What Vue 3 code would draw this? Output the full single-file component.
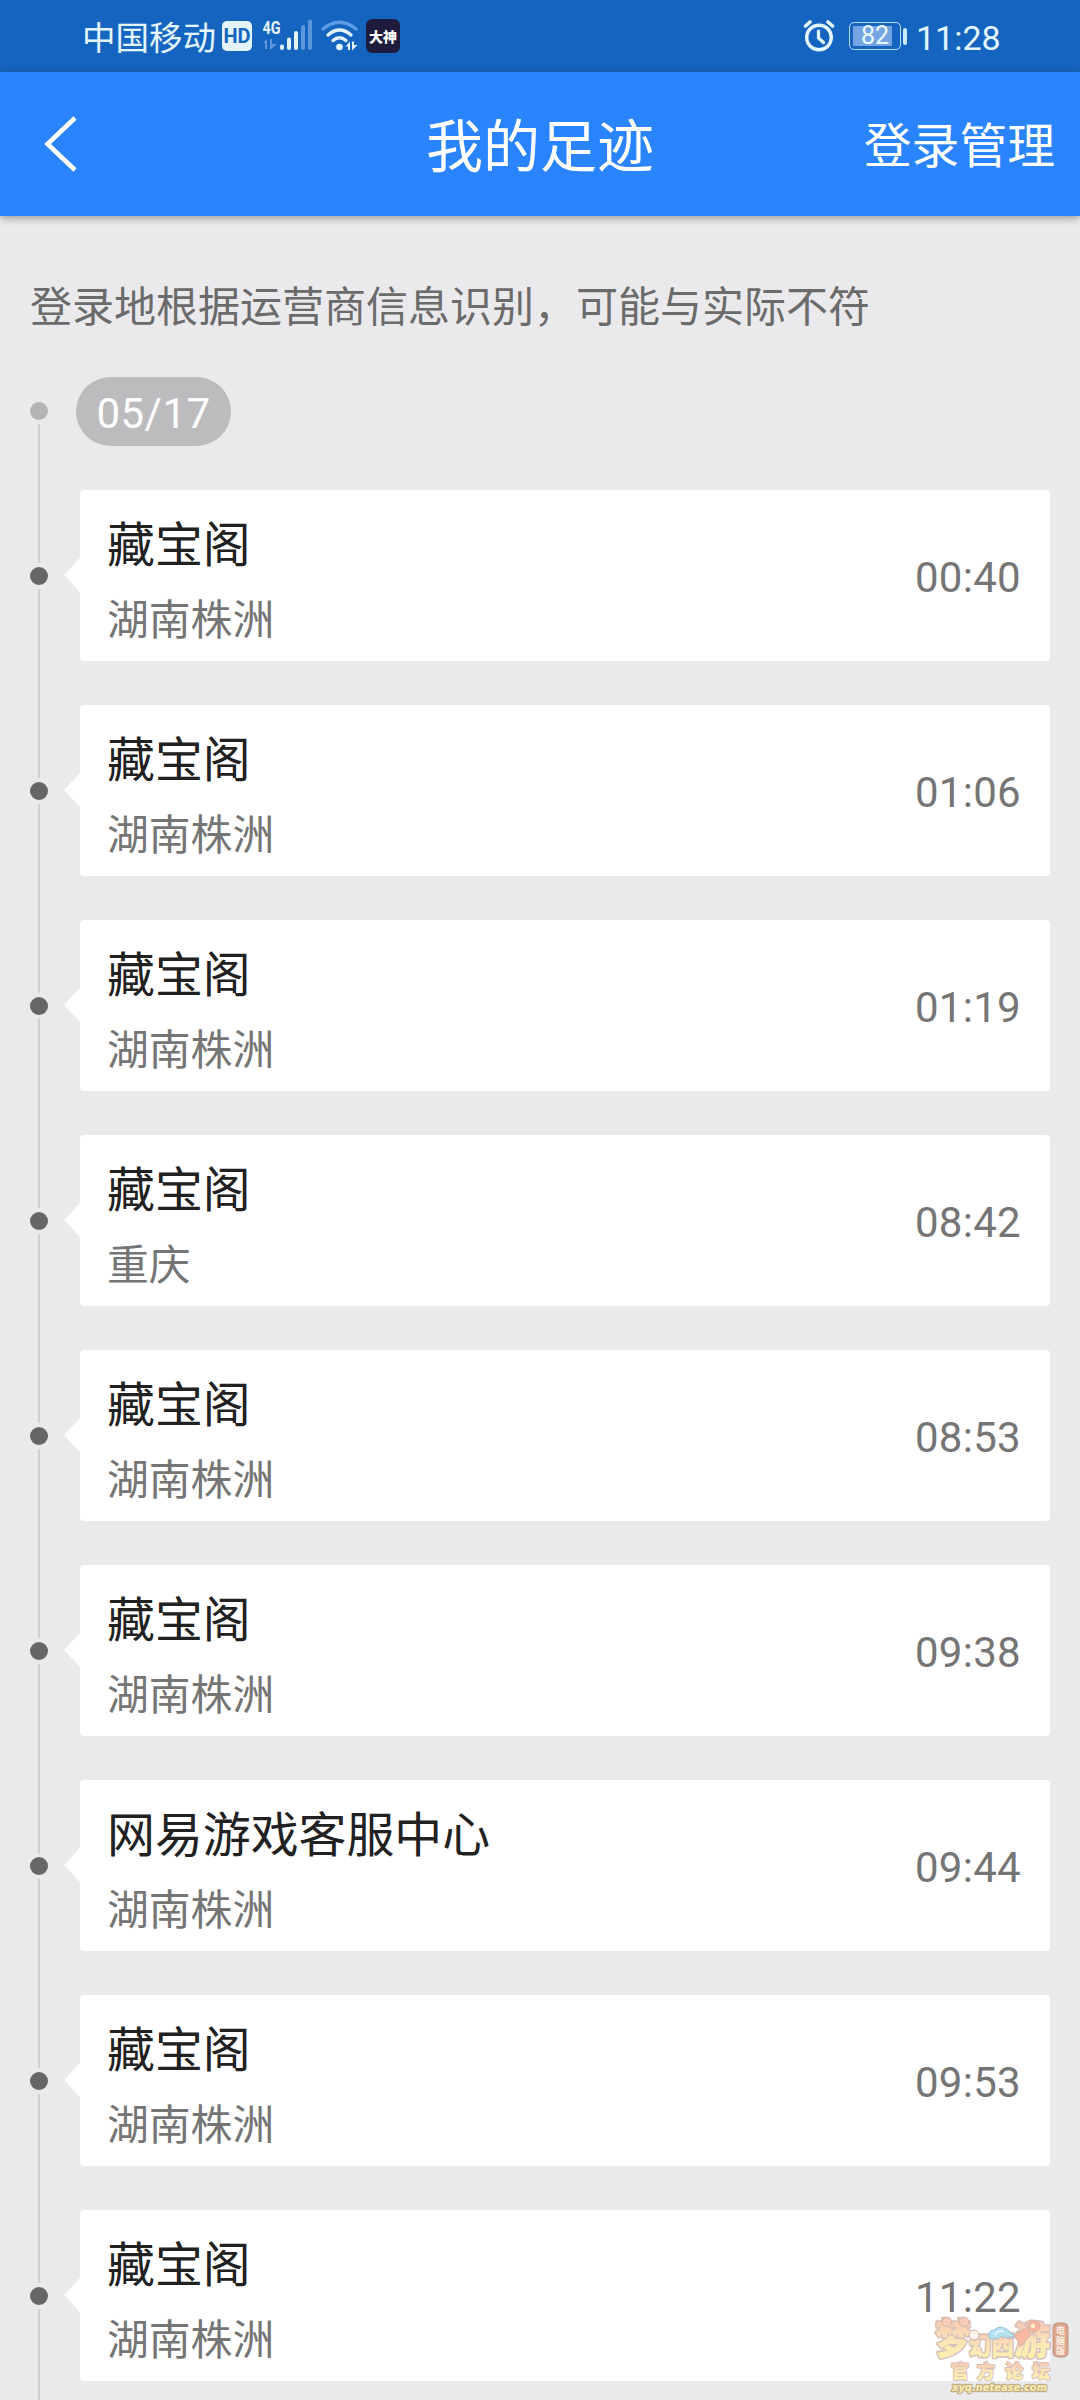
<script setup>
const records = [
  { name: '藏宝阁', place: '湖南株洲', time: '00:40' },
  { name: '藏宝阁', place: '湖南株洲', time: '01:06' },
  { name: '藏宝阁', place: '湖南株洲', time: '01:19' },
  { name: '藏宝阁', place: '重庆', time: '08:42' },
  { name: '藏宝阁', place: '湖南株洲', time: '08:53' },
  { name: '藏宝阁', place: '湖南株洲', time: '09:38' },
  { name: '网易游戏客服中心', place: '湖南株洲', time: '09:44' },
  { name: '藏宝阁', place: '湖南株洲', time: '09:53' },
  { name: '藏宝阁', place: '湖南株洲', time: '11:22' },
]
</script>

<template>
  <div class="screen">
    <div class="status">
      <span class="carrier">中国移动</span>
      <span class="hd">HD</span>
      <svg class="signal" width="52" height="36" viewBox="0 0 52 36">
        <text x="0.5" y="15.5" font-size="19" font-weight="700" textLength="18" lengthAdjust="spacingAndGlyphs" fill="#e3f4ff">4G</text>
        <g fill="#5c96dc">
          <path d="M1 25 L5 21 V31 H3 V25Z M8 21 H10 V26 H15 L8 32Z" />
          <rect x="39" y="7" width="4" height="25" rx="2" />
          <rect x="46" y="1.500" width="4" height="30.500" rx="2" />
        </g>
        <g fill="#e3f4ff">
          <rect x="18" y="26.500" width="4" height="5.500" rx="2" />
          <rect x="25" y="19.500" width="4" height="12.500" rx="2" />
          <rect x="32" y="13" width="4" height="19" rx="2" />
        </g>
      </svg>
      <svg class="wifi" width="38" height="32" viewBox="0 0 38 32">
        <g fill="none" stroke-width="3.400" stroke-linecap="round">
          <path d="M2 9 Q18.500 -4.500 35 9" stroke="#5c9ce4" />
          <path d="M7 15 Q18.500 5 30 15" stroke="#e3f4ff" />
          <path d="M12 20.500 Q18.500 15 25 20.500" stroke="#e3f4ff" />
        </g>
        <circle cx="18.500" cy="27" r="3.300" fill="#e3f4ff" />
        <path d="M24.500 26.500 L29 21.500 V30 H27 V26.500Z M31 21.500 H33 V25 H36.500 L31 30.500Z" fill="#e3f4ff" />
      </svg>
      <span class="app">大神</span>
      <svg class="alarm" width="32" height="34" viewBox="0 0 32 34">
        <g fill="none" stroke="#e3f8ff" stroke-linecap="round" stroke-linejoin="round">
          <circle cx="16" cy="18.500" r="12.300" stroke-width="3.400" />
          <path d="M15.500 12 V19 L20.500 23.500" stroke-width="3.200" />
          <path d="M2.500 7 L7 3 M25 3 L29.500 7" stroke-width="3.600" />
        </g>
      </svg>
      <div class="battery"><span class="level"></span><span class="percent">82</span></div>
      <span class="tip"></span>
      <span class="clock">11:28</span>
    </div>

    <header class="bar">
      <svg class="back" width="40" height="60" viewBox="0 0 40 60">
        <path d="M35 4 L7.500 30 L35 56" fill="none" stroke="#fff" stroke-width="4.600" />
      </svg>
      <h1>我的足迹</h1>
      <span class="manage">登录管理</span>
    </header>

    <main>
      <p class="notice">登录地根据运营商信息识别，可能与实际不符</p>

      <div class="date-row">
        <div class="rail first"><i class="dot pale"></i><i class="line"></i></div>
        <span class="pill">05/17</span>
      </div>

      <div v-for="(r, i) in records" :key="i" class="row">
        <div class="rail"><i class="line"></i><i class="dot"></i><i class="line"></i></div>
        <article class="card">
          <div class="info">
            <h2>{{ r.name }}</h2>
            <p>{{ r.place }}</p>
          </div>
          <time>{{ r.time }}</time>
        </article>
      </div>
    </main>

    <svg class="mark" width="142" height="86" viewBox="0 0 142 86">
      <defs>
        <linearGradient id="warm" x1="0" y1="0" x2="0" y2="1">
          <stop offset="0.200" stop-color="#f8bda6" />
          <stop offset="0.550" stop-color="#fbe0ac" />
          <stop offset="0.900" stop-color="#fff2a0" />
        </linearGradient>
      </defs>
      <g paint-order="stroke" stroke="#d3b9b0" stroke-linejoin="round" font-weight="900">
        <g fill="url(#warm)" stroke-width="3.400">
          <text x="3" y="40" font-size="41" textLength="36" lengthAdjust="spacingAndGlyphs">梦</text>
          <text x="37" y="41" font-size="26" textLength="22" lengthAdjust="spacingAndGlyphs">幻</text>
          <text x="59" y="41" font-size="26" textLength="23" lengthAdjust="spacingAndGlyphs">西</text>
          <text x="82" y="40" font-size="38" textLength="36" lengthAdjust="spacingAndGlyphs">游</text>
        </g>
        <g font-size="18" stroke-width="2.200" fill="url(#warm)">
          <text x="19" y="63.500">官</text>
          <text x="45" y="63.500">方</text>
          <text x="73" y="63.500">论</text>
          <text x="100" y="63.500">坛</text>
        </g>
      </g>
      <g stroke="#cda69b" stroke-width="1">
        <circle cx="15" cy="8" r="4.800" fill="#f9c3ad" />
        <circle cx="32" cy="8" r="4.800" fill="#f9c3ad" />
        <circle cx="42" cy="21" r="5" fill="#fff1ea" />
        <circle cx="102" cy="12" r="6" fill="#f7a68e" />
        <path d="M82 21 Q89 16 96 13 L98 22 L88 33 Q86 26 82 21Z" fill="#f7ad94" />
      </g>
      <path d="M57 24 Q55 17 62 16 Q68 10 76 16 Q79 20 83 22 Q74 25 70 22 Q64 27 57 24Z" fill="#a9dcf2" stroke="#8bb7cf" />
      <path d="M63 21 Q66 15 72 18" fill="none" stroke="#e9f8ff" stroke-width="1.500" />
      <circle cx="101" cy="12" r="2.200" fill="#fff2c4" />
      <rect x="121.500" y="9.500" width="14" height="33" rx="4" fill="#dfa084" stroke="#c98f77" stroke-width="2" />
      <g font-size="9" font-weight="700" fill="#fff3e6">
        <text x="124" y="19.500">电</text>
        <text x="124" y="29.500">脑</text>
        <text x="124" y="39.500">版</text>
      </g>
      <text class="site" x="20" y="77" font-size="11" textLength="95" lengthAdjust="spacingAndGlyphs" fill="#fff0a0" stroke="#b9a37a" stroke-width="2.600" stroke-linejoin="round" paint-order="stroke">xyq.netease.com</text>
    </svg>
  </div>
</template>

<style>
body {
  margin: 0;
  background: #eaeaec;
}
</style>

<style scoped>
.screen {
  position: relative;
  width: 1080px;
  height: 2400px;
  overflow: hidden;
  background: #eaeaec;
  font-family: "Noto Sans CJK SC", sans-serif;
}
h1, h2, p {
  margin: 0;
  font-weight: 400;
}
.status {
  display: flex;
  align-items: center;
  box-sizing: border-box;
  height: 72px;
  padding-left: 82px;
  background: #1565c0;
  color: #e3f6ff;
}
.carrier {
  width: 136px;
  font-size: 33.500px;
  line-height: 70px;
  white-space: nowrap;
}
.hd {
  width: 30px;
  height: 30px;
  margin-left: 4px;
  border-radius: 5px;
  background: #e3f4ff;
  color: #1565c0;
  font: 700 20px/30px Roboto, sans-serif;
  text-align: center;
}
.signal {
  margin-left: 10px;
  overflow: visible;
  font-family: Roboto, sans-serif;
}
.wifi {
  margin-left: 7px;
}
.app {
  width: 34px;
  height: 34px;
  margin-left: 7px;
  border-radius: 6px;
  background: #1d1c3c;
  color: #fff;
  font-size: 14px;
  font-weight: 900;
  line-height: 34px;
  text-align: center;
}
.alarm {
  margin-left: 403px;
}
.battery {
  position: relative;
  box-sizing: border-box;
  width: 52px;
  height: 28px;
  margin-left: 14px;
  padding: 3px;
  border: 1.5px solid #b5dcff;
  border-radius: 5px;
}
.level {
  display: block;
  width: 39px;
  height: 20px;
  background: #74a5e2;
}
.percent {
  position: absolute;
  inset: 0;
  color: #e9faff;
  font: 400 25px/26px Roboto, sans-serif;
  text-align: center;
}
.tip {
  width: 4px;
  height: 17px;
  margin-left: 2px;
  border-radius: 2px;
  background: #cbeaff;
}
.clock {
  margin: 3px 0 0 9px;
  font: 400 34px/42px Roboto, sans-serif;
}
.bar {
  position: relative;
  display: grid;
  grid-template-columns: 1fr auto 1fr;
  align-items: center;
  height: 144px;
  background: #2b84ff;
  box-shadow: 0 2px 8px rgba(0, 0, 0, 0.36);
  color: #fff;
}
.back {
  margin: -1px 0 0 40px;
}
.bar h1 {
  margin-top: -5px;
  font-size: 57px;
  line-height: 80px;
}
.manage {
  justify-self: end;
  margin-top: -3px;
  padding-right: 25px;
  font-size: 47.800px;
  line-height: 70px;
}
.notice {
  padding: 58px 0 0 30px;
  color: #6b6b6b;
  font-size: 42px;
  line-height: 60px;
}
.date-row {
  display: flex;
  height: 91px;
  padding-top: 43px;
}
.row {
  display: flex;
  height: 215px;
}
.rail {
  display: flex;
  flex-direction: column;
  align-items: center;
  width: 78px;
  margin-right: 2px;
}
.rail.first {
  margin-right: -2px;
  padding-top: 21px;
}
.line {
  flex: 1;
  width: 2px;
  background: #cfcfd1;
}
.dot {
  width: 18px;
  height: 18px;
  margin: 4px 0;
  border-radius: 50%;
  background: #666;
}
.pale {
  background: #b4b4b4;
}
.pill {
  width: 155px;
  height: 69px;
  border-radius: 35px;
  background: #bcbcbe;
  color: #fff;
  font: 400 42px/73px Roboto, sans-serif;
  letter-spacing: 0.5px;
  text-align: center;
}
.card {
  position: relative;
  display: flex;
  align-items: center;
  justify-content: space-between;
  box-sizing: border-box;
  width: 970px;
  height: 171px;
  margin-top: 22px;
  padding: 0 29px 0 27px;
  border-radius: 4px;
  background: #fff;
}
.card::before {
  content: "";
  position: absolute;
  left: -16px;
  top: 68px;
  border: solid transparent;
  border-width: 17px 16px 17px 0;
  border-right-color: #fff;
}
.card h2 {
  padding-top: 1px;
  color: #212121;
  font-size: 47.900px;
  line-height: 60px;
}
.card p {
  margin-top: 21px;
  color: #757575;
  font-size: 41.800px;
  line-height: 50px;
}
.card time {
  margin-top: 5px;
  color: #757575;
  font: 400 42px/50px Roboto, sans-serif;
  letter-spacing: 0.3px;
}
.mark {
  position: absolute;
  left: 932px;
  top: 2314px;
  overflow: visible;
  opacity: 0.85;
}
.site {
  font-family: "DejaVu Sans", sans-serif;
  font-weight: 700;
  font-style: italic;
}
</style>
